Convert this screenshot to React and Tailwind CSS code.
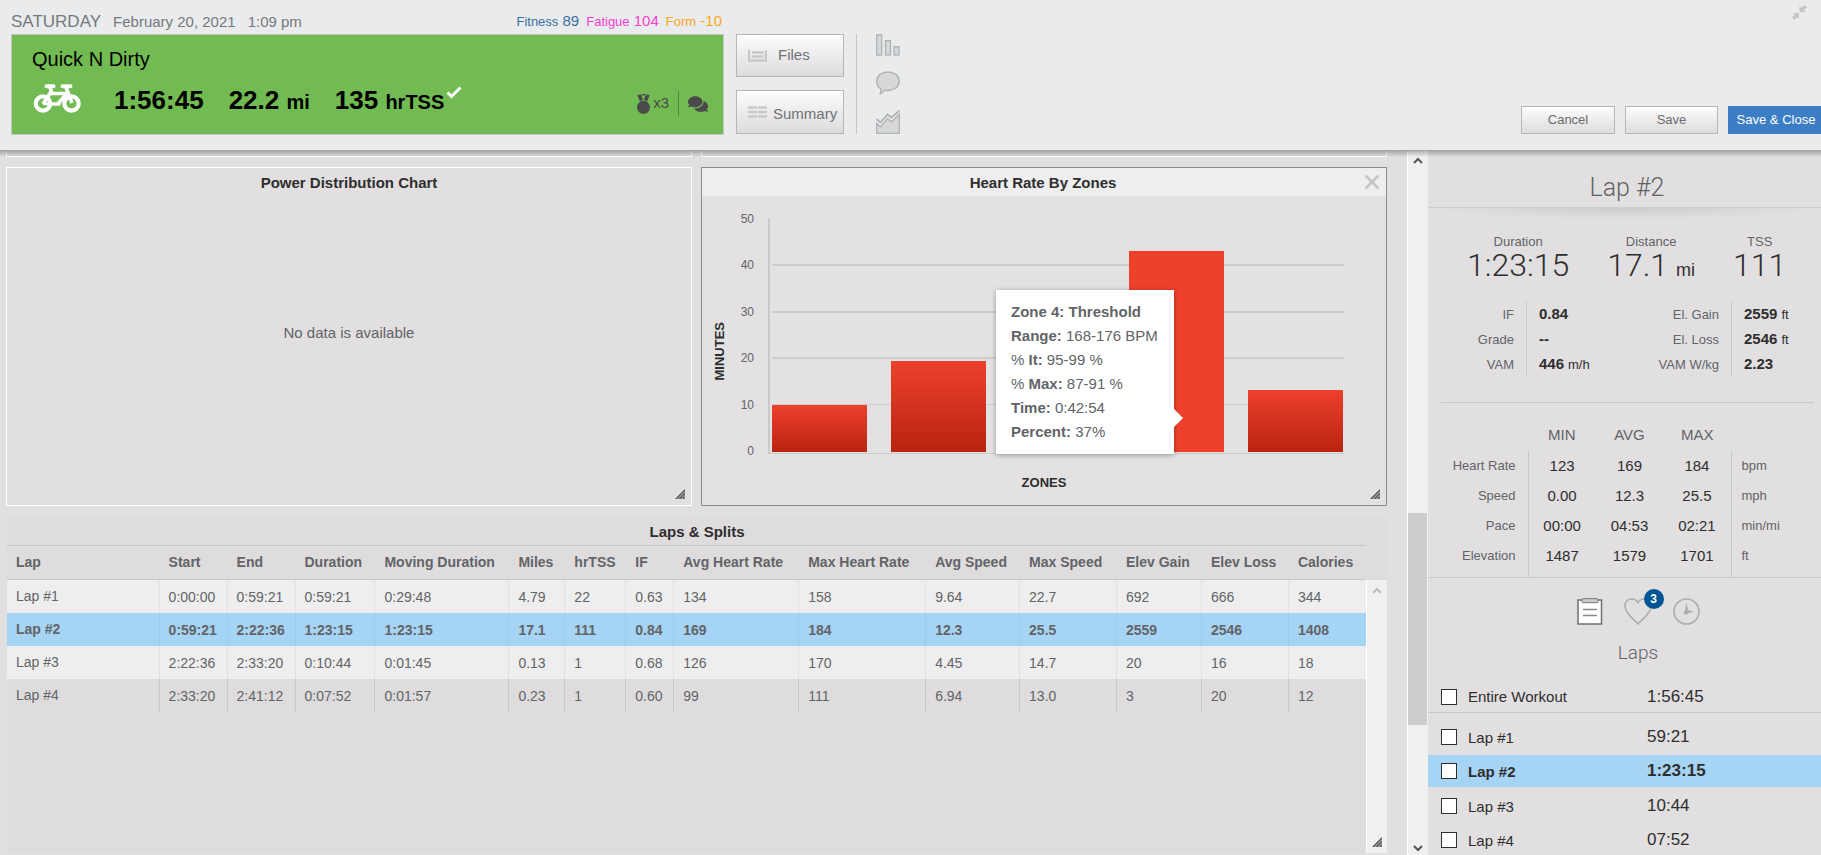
import React from "react";
import { FaComments } from "react-icons/fa";

const COLUMNS = [
  ["Lap", "w-[153px]"],
  ["Start", "w-[68px]"],
  ["End", "w-[68px]"],
  ["Duration", "w-[80px]"],
  ["Moving Duration", "w-[134px]"],
  ["Miles", "w-[56px]"],
  ["hrTSS", "w-[61px]"],
  ["IF", "w-[48px]"],
  ["Avg Heart Rate", "w-[125px]"],
  ["Max Heart Rate", "w-[127px]"],
  ["Avg Speed", "w-[94px]"],
  ["Max Speed", "w-[97px]"],
  ["Elev Gain", "w-[85px]"],
  ["Elev Loss", "w-[87px]"],
  ["Calories", "w-[77px]"],
];

const LAPS = [
  ["Lap #1", "0:00:00", "0:59:21", "0:59:21", "0:29:48", "4.79", "22", "0.63", "134", "158", "9.64", "22.7", "692", "666", "344"],
  ["Lap #2", "0:59:21", "2:22:36", "1:23:15", "1:23:15", "17.1", "111", "0.84", "169", "184", "12.3", "25.5", "2559", "2546", "1408"],
  ["Lap #3", "2:22:36", "2:33:20", "0:10:44", "0:01:45", "0.13", "1", "0.68", "126", "170", "4.45", "14.7", "20", "16", "18"],
  ["Lap #4", "2:33:20", "2:41:12", "0:07:52", "0:01:57", "0.23", "1", "0.60", "99", "111", "6.94", "13.0", "3", "20", "12"],
];

const ROW_STYLES = [
  "bg-[#eeeeee] [&>td]:border-[#e2e2e2]",
  "bg-[#a6d4f5] font-bold [&>td]:border-[#9ccbee]",
  "bg-[#eeeeee] [&>td]:border-[#e2e2e2]",
  "[&>td]:border-[#c8c8c8]",
];

const ZONES = [
  { x: 4, minutes: 10.1 },
  { x: 123, minutes: 19.6 },
  { x: 242, minutes: 13 },
  { x: 361, minutes: 43.2, active: true },
  { x: 480, minutes: 13.4 },
];

const MIN_AVG_MAX = [
  ["Heart Rate", "123", "169", "184", "bpm"],
  ["Speed", "0.00", "12.3", "25.5", "mph"],
  ["Pace", "00:00", "04:53", "02:21", "min/mi"],
  ["Elevation", "1487", "1579", "1701", "ft"],
];

function BikeIcon() {
  return (
    <svg width="50" height="30" viewBox="0 0 50 30" fill="none" stroke="#fff" aria-hidden="true">
      <circle cx="11" cy="19.500" r="7.200" strokeWidth="4.200" />
      <circle cx="39.500" cy="19.500" r="7.200" strokeWidth="4.200" />
      <path d="M11 20 L18.500 8.500 M17 9.500 H34 M26.500 19 L35.500 9 M17.500 2 L19.500 8 M33.500 2 L40 19" strokeWidth="3.600" strokeLinejoin="round" />
      <path d="M14.500 2.200 H21.500 M30.500 2.200 H38.500" strokeWidth="4" strokeLinecap="round" />
      <path d="M17 20 H27" strokeWidth="3.600" strokeLinecap="round" />
      <path d="M11 19.500 L16 20" strokeWidth="3" />
    </svg>
  );
}

function MedalIcon() {
  return (
    <svg width="14" height="20" viewBox="0 0 14 20" fill="#4a4a4a" aria-hidden="true">
      <circle cx="6.500" cy="13.300" r="6.500" />
      <path d="M0.300 1.200 L3.800 0.300 L6.200 5.500 L3 7.500 Z M12.700 1.200 L9.200 0.300 L6.800 5.500 L10 7.500 Z M4.500 0 H8.500 L7.800 1.500 H5.200 Z" />
    </svg>
  );
}

function FilesIcon() {
  return (
    <svg width="19" height="12" viewBox="0 0 19 12" fill="none" aria-hidden="true">
      <path d="M1 0 V10.500 H18 V0" stroke="#c6c8ca" strokeWidth="2.400" />
      <path d="M4 2.500 H15.500 M4 6.500 H15.500" stroke="#c6c8ca" strokeWidth="2.400" />
    </svg>
  );
}

function SummaryIcon() {
  return (
    <svg width="19" height="12" viewBox="0 0 19 12" aria-hidden="true">
      <path d="M0 1.500 H9 M10 1.500 H19 M0 6 H9 M10 6 H19 M0 10.500 H9 M10 10.500 H19" stroke="#c6c8ca" strokeWidth="2.500" />
    </svg>
  );
}

function BarsIcon() {
  return (
    <svg width="24" height="22" viewBox="0 0 24 22" fill="#d5d7d9" stroke="#b0b2b4" strokeWidth="1.300" aria-hidden="true">
      <rect x="0.700" y="0.700" width="5" height="20.300" />
      <rect x="9.500" y="6.700" width="5" height="14.300" />
      <rect x="18" y="12.700" width="5" height="8.300" />
    </svg>
  );
}

function BubbleIcon() {
  return (
    <svg width="24" height="24" viewBox="0 0 24 24" fill="#d5d7d9" stroke="#b0b2b4" strokeWidth="1.300" aria-hidden="true">
      <path d="M12 1 C18.500 1 23.300 5 23.300 10 C23.300 15.500 18.500 19.500 12 19.500 C11 19.500 10 19.400 9 19.200 C7.500 21 6 22.200 4.200 23 C4.800 21.500 5 19.500 4.500 17.500 C2 16 0.700 13 0.700 10 C0.700 5 5.500 1 12 1 Z" />
    </svg>
  );
}

function AreaIcon() {
  return (
    <svg width="24" height="24" viewBox="0 0 24 24" aria-hidden="true">
      <path d="M0.700 23.300 V13.500 L4.500 17 L11.500 8.500 L15.500 12 L23.300 4 V23.300 Z" fill="#d5d7d9" stroke="#b0b2b4" strokeWidth="1.300" />
      <path d="M0.500 9 L4.500 12.500 L11.500 4.500 L15.500 7.500 L23.500 0.500" fill="none" stroke="#b0b2b4" strokeWidth="1.800" />
    </svg>
  );
}

function CollapseIcon() {
  return (
    <svg width="15" height="15" viewBox="0 0 15 15" fill="#c3c5c7" aria-hidden="true">
      <path d="M7.500 1 V7 H13.500 L11.800 5.300 L15 2.500 L12.500 0 L9.300 2.700 Z" />
      <path d="M7 14 V8 H1 L2.700 9.600 L0 12.500 L2.500 15 L5.200 12.200 Z" />
    </svg>
  );
}

function Chevron({ down, faint }) {
  return (
    <svg width="10" height="7" viewBox="0 0 10 7" fill="none" aria-hidden="true">
      <path d={down ? "M1 1 L5 5 L9 1" : "M1 6 L5 2 L9 6"} stroke={faint ? "#bdbdbd" : "#555"} strokeWidth="2" />
    </svg>
  );
}

function ResizeGrip() {
  return (
    <svg width="10" height="10" viewBox="0 0 10 10" aria-hidden="true">
      <path d="M10 0 V10 H0 Z" fill="#a0a0a0" />
      <path d="M1 10 L10 1 M4.500 10 L10 4.500 M8 10 L10 8" stroke="#555" strokeWidth="1.200" />
    </svg>
  );
}

function Header() {
  return (
    <header className="relative z-10 flex h-[151px] shrink-0 items-start overflow-hidden border-b border-[#a5a7a7] bg-[#e9ebec] pl-[11px]">
      <div className="w-[713px]">
        <div className="flex h-[34px] items-end justify-between pb-[3px] pr-[2px] text-[15px] text-[#77797c]">
          <div className="flex items-baseline leading-[18px]">
            <span className="text-[17px]">SATURDAY</span>
            <span className="ml-3">February 20, 2021</span>
            <span className="ml-3">1:09 pm</span>
          </div>
          <div className="flex items-baseline gap-[7px] leading-[18px]">
            <span className="text-[#39709f]"><span className="text-[13px]">Fitness</span> 89</span>
            <span className="text-[#f53fce]"><span className="text-[13px]">Fatigue</span> 104</span>
            <span className="text-[#fba51c]"><span className="text-[13px]">Form</span> -10</span>
          </div>
        </div>
        <section className="h-[101px] border border-[#c3c6c3] bg-[#72bb53] px-5 pt-3 text-black">
          <h1 className="text-[20px] leading-6">Quick N Dirty</h1>
          <div className="flex items-start justify-between pt-[13px]">
            <div className="flex items-start">
              <BikeIcon />
              <div className="ml-8 flex items-baseline gap-[25px] text-[26px] font-bold leading-[33px]">
                <span>1:56:45</span>
                <span>22.2 <span className="text-[20px]">mi</span></span>
                <span className="flex items-baseline">
                  <span>135 <span className="text-[20px]">hrTSS</span></span>
                  <svg className="ml-[2px] mt-[2px] self-start" width="16" height="13" viewBox="0 0 16 13" aria-label="Completed">
                    <path d="M1.500 6.500 L5.500 10.500 L14.500 1.500" fill="none" stroke="#fff" strokeWidth="3" />
                  </svg>
                </span>
              </div>
            </div>
            <div className="-mr-[5px] flex items-center pt-[7px] text-[15px] text-[#4a4a4a]">
              <MedalIcon />
              <span className="ml-[2px]">x3</span>
              <span className="ml-[9px] h-[25px] w-px bg-[#528a3c]" />
              <FaComments className="ml-[9px] size-5" />
            </div>
          </div>
        </section>
      </div>
      <div className="ml-3 mt-[34px] flex w-[108px] flex-col gap-[13px] text-[15px] text-[#6f7275]">
        <button className="flex h-[43px] items-center border border-[#b5b6b7] bg-gradient-to-b from-[#fdfdfd] to-[#dddbdc] pl-[11px]">
          <FilesIcon /><span className="ml-[11px]">Files</span>
        </button>
        <button className="flex h-[44px] items-center border border-[#b5b6b7] bg-gradient-to-b from-[#fdfdfd] to-[#dddbdc] pl-[11px]">
          <SummaryIcon /><span className="ml-[6px] pt-[5px]">Summary</span>
        </button>
      </div>
      <div className="ml-3 mt-[34px] flex h-[100px] flex-col justify-between border-l border-[#c4c6c8] pl-[19px]">
        <button aria-label="Chart"><BarsIcon /></button>
        <button aria-label="Comments"><BubbleIcon /></button>
        <button aria-label="Trends"><AreaIcon /></button>
      </div>
      <div className="-mr-[7px] ml-auto flex flex-col items-end">
        <div className="mt-[5px] flex gap-[13px]">
          <button aria-label="Collapse"><CollapseIcon /></button>
          <span className="w-2" />
        </div>
        <div className="mt-[86px] flex gap-[10px] text-[13px] text-[#6b6b6b]">
          <button className="h-7 w-[94px] border border-[#b5b6b7] bg-gradient-to-b from-[#fdfdfd] to-[#dcdcdc]">Cancel</button>
          <button className="h-7 w-[93px] border border-[#b5b6b7] bg-gradient-to-b from-[#fdfdfd] to-[#dcdcdc]">Save</button>
          <button className="h-7 w-[100px] bg-[#3b7ec5] pr-1 text-white">Save &amp; Close</button>
        </div>
      </div>
    </header>
  );
}

function HeartRatePanel() {
  return (
    <section className="relative flex flex-col border border-[#8c8c8c] bg-[#e3e1e2]">
      <div className="flex h-7 items-center bg-[#eeeeee] pr-[6px] text-[15px] font-bold text-[#2e2e2e]">
        <span className="w-5" />
        <h2 className="grow pt-[2px] text-center">Heart Rate By Zones</h2>
        <button aria-label="Close" className="text-[#c5c5c5]">
          <svg width="16" height="16" viewBox="0 0 16 16" aria-hidden="true">
            <path d="M1.500 1.500 L14.500 14.500 M14.500 1.500 L1.500 14.500" stroke="currentColor" strokeWidth="2.500" />
          </svg>
        </button>
      </div>
      <div className="flex pl-[8px] pr-[42px] pt-[13px]">
        <div className="flex w-5 items-center justify-center">
          <span className="rotate-180 pb-8 text-[13px] font-bold leading-5 text-[#2e2e2e] [writing-mode:vertical-rl]">MINUTES</span>
        </div>
        <div className="flex h-[252px] w-[38px] flex-col justify-between pr-[14px] text-right text-[12px] leading-[20px] text-[#626467]">
          <span>50</span><span>40</span><span>30</span><span>20</span><span>10</span><span>0</span>
        </div>
        <div className="relative grow pt-[9px]">
          <svg className="block h-[237px] w-full" viewBox="0 0 576 237" preserveAspectRatio="none" shapeRendering="crispEdges" role="img" aria-label="Minutes per heart rate zone">
            <defs>
              <linearGradient id="bar" x1="0" y1="0" x2="0" y2="1">
                <stop offset="0" stopColor="#ed412c" />
                <stop offset="1" stopColor="#b92311" />
              </linearGradient>
            </defs>
            <path d="M0 0 H2 V235 H576 V236 H0 Z" fill="#c9c9ca" />
            <path d="M4 46 H576 V48 H4 Z M4 93 H576 V95 H4 Z M4 139 H576 V141 H4 Z M4 186 H576 V187 H4 Z" fill="#cdcccd" />
            {ZONES.map((z) => (
              <rect key={z.x} x={z.x} y={234 - z.minutes * 4.65} width="95" height={z.minutes * 4.65} fill={z.active ? "#ed412c" : "url(#bar)"} />
            ))}
          </svg>
          <div className="absolute right-[170px] top-[81px] w-[178px] bg-white px-[15px] py-[10px] text-[15px] leading-6 text-[#626467] shadow-[0_1px_5px_rgba(0,0,0,0.35)]">
            <p className="font-bold">Zone 4: Threshold</p>
            <p className="whitespace-nowrap"><b>Range:</b> 168-176 BPM</p>
            <p>% <b>It:</b> 95-99 %</p>
            <p>% <b>Max:</b> 87-91 %</p>
            <p><b>Time:</b> 0:42:54</p>
            <p><b>Percent:</b> 37%</p>
            <svg className="absolute -right-[9px] top-[119px]" width="9" height="18" viewBox="0 0 9 18" aria-hidden="true">
              <path d="M0 0 L9 9 L0 18 Z" fill="#fff" />
            </svg>
          </div>
        </div>
      </div>
      <p className="pt-3 text-center text-[13px] font-bold leading-5 text-[#2e2e2e]">ZONES</p>
      <div className="absolute bottom-[6px] right-[6px]"><ResizeGrip /></div>
    </section>
  );
}

function LapsTable() {
  return (
    <section className="ml-px flex grow flex-col bg-[#dedcdd] text-[14px] text-[#626467]">
      <h2 className="flex h-7 items-center justify-center pt-[2px] text-[15px] font-bold text-[#2e2e2e]">Laps &amp; Splits</h2>
      <div className="flex grow">
        <table className="grow table-fixed border-separate border-spacing-0 self-start">
          <thead>
            <tr>
              {COLUMNS.map(([name, width]) => (
                <th key={name} className={`${width} h-[35px] whitespace-nowrap border-y border-[#c8c8c8] p-0 pl-[9px] text-left`}>{name}</th>
              ))}
            </tr>
          </thead>
          <tbody>
            {LAPS.map((row, r) => (
              <tr key={row[0]} className={ROW_STYLES[r]}>
                {row.map((cell, c) => (
                  <td key={c} className="h-[33px] border-r p-0 pl-[9px] pt-[2px] first:pt-0 last:border-r-0">{cell}</td>
                ))}
              </tr>
            ))}
          </tbody>
        </table>
        <div className="mt-[35px] flex w-[21px] shrink-0 flex-col items-center justify-between border-l border-white bg-[#f0f0f0] pb-[6px] pt-[7px]">
          <Chevron faint />
          <ResizeGrip />
        </div>
      </div>
    </section>
  );
}

function Stat({ label, value, unit }) {
  return (
    <div className="flex h-[25px] items-center">
      <dt className="w-full border-r border-[#c9c9c9] pr-3 text-right text-[13px] leading-[25px] text-[#626467]">{label}</dt>
      <dd className="w-[100px] shrink-0 whitespace-nowrap pl-3 text-[15px] font-bold text-[#2e2e2e]">
        {value}{unit && <span className="ml-1 text-[13px] font-normal">{unit}</span>}
      </dd>
    </div>
  );
}

function LapRow({ name, time, className }) {
  return (
    <label className={`flex items-center pl-[13px] text-[#2e2e2e] ${className}`}>
      <input type="checkbox" className="size-4 shrink-0 appearance-none border border-[#2e2e2e] bg-white" />
      <span className="ml-[11px] w-[179px] pt-[2px] text-[15px]">{name}</span>
      <span className="text-[17px]">{time}</span>
    </label>
  );
}

function Sidebar() {
  return (
    <aside className="w-[393px] shrink-0 overflow-hidden">
      <h2 className="pl-[5px] pt-[22px] text-center font-['Roboto'] text-[25px] font-light leading-[30px] text-[#626467]">Lap #2</h2>
      <div className="mt-[4px] h-3 border-t border-[#cfcdce] bg-[radial-gradient(ellipse_at_top,#cdcbcc,transparent_70%)]" />
      <dl className="flex gap-[38px] pl-[39px] pt-[15px] text-center text-[#2e2e2e]">
        {[["Duration", "1:23:15"], ["Distance", "17.1", "mi"], ["TSS", "111"]].map(([label, value, unit]) => (
          <div key={label}>
            <dt className="text-[13px] leading-4 text-[#626467]">{label}</dt>
            <dd className="font-['Roboto'] text-[32px] font-light leading-[30px]">
              {value}{unit && <span className="ml-2 font-['Liberation_Sans'] text-[18px] font-normal">{unit}</span>}
            </dd>
          </div>
        ))}
      </dl>
      <div className="mr-[-11px] grid grid-cols-2 pt-[17px]">
        <dl className="w-[199px]">
          <Stat label="IF" value="0.84" />
          <Stat label="Grade" value="--" />
          <Stat label="VAM" value="446" unit="m/h" />
        </dl>
        <dl>
          <Stat label="El. Gain" value="2559" unit="ft" />
          <Stat label="El. Loss" value="2546" unit="ft" />
          <Stat label="VAM W/kg" value="2.23" />
        </dl>
      </div>
      <hr className="ml-[13px] mr-[7px] mt-[25px] border-[#c9c9c9]" />
      <table className="mt-[17px] w-full table-fixed border-collapse text-[15px] text-[#2e2e2e]">
        <thead>
          <tr className="h-[31px] text-[#626467] [&>th]:p-0 [&>th]:font-normal">
            <th className="w-[100px]" /><th>MIN</th><th>AVG</th><th>MAX</th><th className="w-[90px]" />
          </tr>
        </thead>
        <tbody>
          {MIN_AVG_MAX.map(([label, min, avg, max, unit]) => (
            <tr key={label} className="h-[30px] text-center last:h-9 last:[&>*]:pb-[6px]">
              <th className="border-r border-[#c9c9c9] p-0 pr-3 text-right text-[13px] font-normal text-[#626467]">{label}</th>
              <td>{min}</td><td>{avg}</td><td>{max}</td>
              <td className="border-l border-[#c9c9c9] pl-[10px] text-left text-[13px] text-[#626467]">{unit}</td>
            </tr>
          ))}
        </tbody>
      </table>
      <div className="flex h-12 items-end justify-center gap-[21px] border-t border-[#c9c9c9] pl-[27px]">
        <button aria-label="Laps">
          <svg width="26" height="27" viewBox="0 0 26 27" aria-hidden="true">
            <rect x="1" y="2" width="23.500" height="24" fill="#fff" stroke="#777" strokeWidth="1.600" />
            <rect x="5" y="0.700" width="16" height="4" rx="1" fill="#ccc" stroke="#777" />
            <path d="M6 11.500 H20 M6 17.500 H20" stroke="#888" strokeWidth="1.400" />
          </svg>
        </button>
        <button className="relative" aria-label="Peaks">
          <svg width="28" height="27" viewBox="0 0 28 27" fill="none" aria-hidden="true">
            <path d="M14 26 C11 22 1 16 1 8 C1 3.500 4 1 7.500 1 C10.500 1 13 2.500 14 4.500 C15 2.500 17.500 1 20.500 1 C24 1 27 3.500 27 8 C27 16 17 22 14 26 Z" stroke="#adadad" strokeWidth="1.600" />
          </svg>
          <span className="absolute -right-[12px] -top-[9px] flex size-5 items-center justify-center rounded-full bg-[#005695] text-[12px] font-bold text-white">3</span>
        </button>
        <button aria-label="Time">
          <svg width="27" height="27" viewBox="0 0 27 27" fill="none" aria-hidden="true">
            <circle cx="13.500" cy="13.500" r="12.500" stroke="#adadad" strokeWidth="1.600" />
            <path d="M13.300 4 L15 12.300 L21 13.700 L15 15.200 A2.200 2.200 0 1 1 12 12.500 Z" fill="#adadad" />
          </svg>
        </button>
      </div>
      <h3 className="pl-[27px] pt-4 text-center font-['Roboto'] text-[19px] font-light leading-6 text-[#626467]">Laps</h3>
      <LapRow name="Entire Workout" time="1:56:45" className="mt-4 h-[32px] border-b border-[#c9c9c9]" />
      <LapRow name="Lap #1" time="59:21" className="mt-[6px] h-9" />
      <LapRow name="Lap #2" time="1:23:15" className="h-8 bg-[#a6d4f5] font-bold" />
      <LapRow name="Lap #3" time="10:44" className="mt-[2px] h-[34px]" />
      <LapRow name="Lap #4" time="07:52" className="h-[34px]" />
    </aside>
  );
}

export default function App() {
  return (
    <div className="flex h-screen flex-col overflow-hidden bg-[#e1dfe0] font-['Liberation_Sans',Arial,sans-serif]">
      <Header />
      <div className="relative z-20 h-0"><div className="h-[6px] bg-gradient-to-b from-black/25 to-transparent" /></div>
      <div className="flex min-h-0 grow">
        <main className="flex grow flex-col pb-[2px] pl-[6px] pr-5">
          <div className="grid h-[6px] shrink-0 grid-cols-2 gap-[9px]">
            <div className="border border-t-0 border-white" />
            <div className="border border-t-0 border-white" />
          </div>
          <div className="mt-[10px] grid h-[339px] shrink-0 grid-cols-2 gap-[9px]">
            <section className="relative flex flex-col border border-white">
              <h2 className="flex h-7 items-center justify-center pt-[2px] text-[15px] font-bold text-[#2e2e2e]">Power Distribution Chart</h2>
              <p className="pt-[125px] text-center text-[15px] leading-6 text-[#626467]">No data is available</p>
              <div className="absolute bottom-[6px] right-[6px]"><ResizeGrip /></div>
            </section>
            <HeartRatePanel />
          </div>
          <div className="mt-[11px] flex grow flex-col"><LapsTable /></div>
        </main>
        <div className="flex w-[21px] shrink-0 flex-col items-center border-l border-white bg-[#f0f0f0] pb-[3px] pt-[6px]">
          <Chevron />
          <div className="flex w-full grow flex-col pr-px">
            <div className="grow-[348]" />
            <div className="h-[212px] bg-[#cdcdcd]" />
            <div className="grow-[120]" />
          </div>
          <Chevron down />
        </div>
        <Sidebar />
      </div>
    </div>
  );
}
